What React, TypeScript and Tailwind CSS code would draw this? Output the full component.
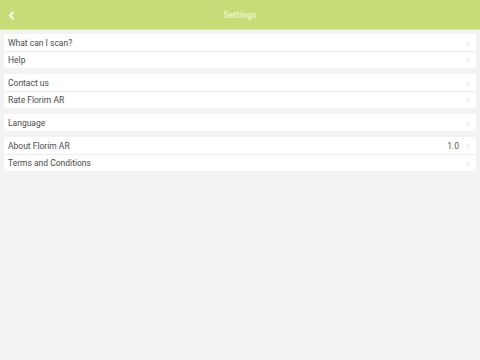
import React from "react";

const groups: { label: string; value?: string }[][] = [
  [{ label: "What can I scan?" }, { label: "Help" }],
  [{ label: "Contact us" }, { label: "Rate Florim AR" }],
  [{ label: "Language" }],
  [{ label: "About Florim AR", value: "1.0" }, { label: "Terms and Conditions" }],
];

export default function App() {
  return (
    <div
      className="w-[480px] h-[360px] bg-[#f3f3f3] flex flex-col"
      style={{ fontFamily: "Roboto, 'Liberation Sans', sans-serif" }}
    >
      <div className="h-[30px] bg-[#c6dc76] border-b border-[#dce9ab] flex items-center relative">
        <svg className="absolute left-[8px] top-[11px]" width="7" height="9" viewBox="0 0 7 9">
          <path d="M5.5 1 L2 4.5 L5.5 8" stroke="#ffffff" strokeWidth="2" fill="none" />
        </svg>
        <div className="flex-1 text-center text-[9px] font-bold text-[#e9f2c4] pt-[2px]">Settings</div>
      </div>
      <div className="flex flex-col gap-[6px] px-[4px] pt-[4px]">
        {groups.map((g, i) => (
          <div key={i} className="bg-white flex flex-col">
            {g.map((r, j) => (
              <div
                key={j}
                className={`h-[17px] flex items-center pl-[4px] pr-[6px] pt-[1px] ${j > 0 ? "border-t border-[#eeeeee]" : ""}`}
              >
                <span className="flex-1 text-[8.5px] text-[#4a4a4a]">{r.label}</span>
                {r.value && <span className="text-[8.5px] text-[#555] mr-[7px]">{r.value}</span>}
                <svg width="4" height="5" viewBox="0 0 4 5">
                  <path d="M1 0.5 L3 2.5 L1 4.5" stroke="#c8c8c8" strokeWidth="0.8" fill="none" />
                </svg>
              </div>
            ))}
          </div>
        ))}
      </div>
    </div>
  );
}
